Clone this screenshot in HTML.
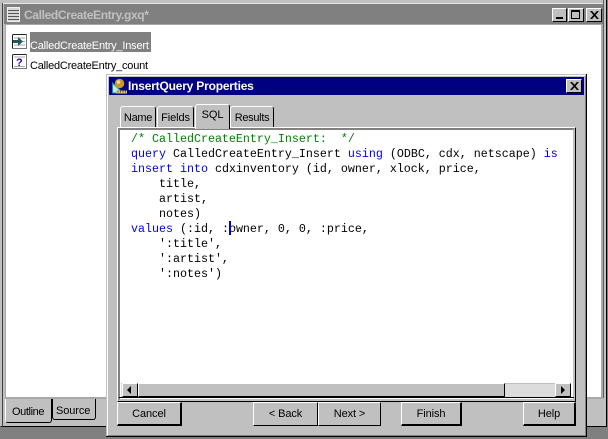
<!DOCTYPE html>
<html><head><meta charset="utf-8">
<style>
html,body{margin:0;padding:0;background:#808080}
#r{position:relative;width:608px;height:439px;overflow:hidden;background:#808080;font-family:"Liberation Sans",sans-serif;font-size:11px;color:#000}
#r div{position:absolute;box-sizing:border-box}
.t{white-space:pre;line-height:14px;letter-spacing:-.1px}
.btn{background:#c0c0c0;border-top:1px solid #fff;border-left:1px solid #fff;border-right:2px solid #000;border-bottom:2px solid #000;text-align:center;line-height:22px;height:24px;letter-spacing:-.1px}
.tb{background:#c0c0c0;border-top:1px solid #fff;border-left:1px solid #fff;border-right:1px solid #000;border-radius:3px 3px 0 0;text-align:center}
.m{position:absolute;left:131px;font-family:"Liberation Mono",monospace;font-size:11.67px;line-height:15px;white-space:pre;color:#000}
.b{color:#0000e0}.g{color:#008000}
.wb{background:#c0c0c0;border-top:1px solid #fff;border-left:1px solid #fff;border-right:1px solid #000;border-bottom:1px solid #000}
</style></head><body><div id="r">
<!-- outer window -->
<div style="left:0;top:0;width:607px;height:427px;background:#c0c0c0;border-right:1px solid #000;border-bottom:1px solid #000;border-left:1px solid #c0c0c0"></div>
<div style="left:2px;top:3px;width:1px;height:424px;background:#404040"></div>
<div style="left:3px;top:3px;width:601px;height:1px;background:#e8e8e8"></div>
<div style="left:603px;top:0;width:1px;height:398px;background:#606060"></div>
<div style="left:4px;top:4px;width:599px;height:20px;background:#808080"></div>
<div style="left:5px;top:24px;width:598px;height:375px;background:#fff;border:1px solid #a8a8a8;border-width:1px 2px 2px 1px"></div>
<!-- title icon -->
<svg style="position:absolute;left:7px;top:7px" width="13" height="15"><rect x="0.5" y="0.5" width="12" height="14" fill="#d8d8d8" stroke="#eee"/><path d="M1 3.5H12M1 6.5H12M1 9.5H12M1 12.5H12" stroke="#555"/></svg>
<div class="t" style="left:24px;top:8px;font-weight:bold;font-size:12px;color:#c0c0c0;letter-spacing:-.36px">CalledCreateEntry.gxq*</div>
<!-- window buttons -->
<div class="wb" style="left:552px;top:8px;width:15px;height:14px"></div>
<div style="left:556px;top:17px;width:7px;height:2px;background:#000"></div>
<div class="wb" style="left:568px;top:8px;width:16px;height:14px"></div>
<div style="left:571px;top:10px;width:9px;height:9px;border:1px solid #000;border-top-width:2px"></div>
<div class="wb" style="left:586px;top:8px;width:16px;height:14px"></div>
<svg style="position:absolute;left:590px;top:11px" width="9" height="8"><path d="M0.5 0L7.5 8M7.5 0L0.5 8M1.5 0L8.5 8M8.5 0L1.5 8" stroke="#000" stroke-width="0.9"/></svg>
<!-- outline icons -->
<svg style="position:absolute;left:12px;top:34px" width="15" height="15"><rect x="0.5" y="0.5" width="14" height="14" fill="#fff" stroke="#777"/><path d="M1 0.5H14M0.5 1V14" stroke="#222"/><path d="M2 4H13M2 7.5H13M2 11H13" stroke="#aaa"/><path d="M1 6H6V3L11 7.5L6 12V9H1Z" fill="#245a5a"/></svg>
<svg style="position:absolute;left:12px;top:54px" width="15" height="15"><rect x="0.5" y="0.5" width="14" height="14" fill="#fff" stroke="#777"/><path d="M1 0.5H14M0.5 1V14" stroke="#222"/><path d="M2 3H13M2 12.5H13" stroke="#aaa"/><text x="4" y="12" font-family="Liberation Sans" font-size="11" font-weight="bold" fill="#2a009a">?</text></svg>
<div style="left:30px;top:32px;width:121px;height:20px;background:#808080"></div>
<div class="t" style="left:30px;top:39px;color:#fff;letter-spacing:-.2px">CalledCreateEntry_Insert</div>
<div class="t" style="left:30px;top:59px;letter-spacing:-.22px">CalledCreateEntry_count</div>
<!-- bottom tabs -->
<div style="left:52px;top:399px;width:44px;height:21px;background:#c0c0c0;border-right:1px solid #000;border-bottom:1px solid #000;border-left:1px solid #000;border-radius:0 0 3px 3px"></div>
<div class="t" style="left:56px;top:404px">Source</div>
<div style="left:5px;top:399px;width:47px;height:24px;background:#c0c0c0;border-left:1px solid #fff;border-right:1px solid #000;border-bottom:1px solid #000;border-radius:0 0 3px 3px"></div>
<div class="t" style="left:12px;top:405px;letter-spacing:-.4px">Outline</div>
<!-- dialog -->
<div style="left:106px;top:74px;width:481px;height:363px;background:#c0c0c0;border-right:1px solid #000;border-bottom:1px solid #000"></div>
<div style="left:107px;top:75px;width:479px;height:361px;border-top:1px solid #fff;border-left:1px solid #fff;border-right:1px solid #808080;border-bottom:1px solid #808080"></div>
<div style="left:109px;top:77px;width:475px;height:18px;background:#000080"></div>
<svg style="position:absolute;left:111px;top:78px" width="17" height="16"><path d="M1.5 5V15H12Z" fill="#bfe8ef" stroke="#0a8fa8"/><circle cx="8.5" cy="5.5" r="4.8" fill="#c8962a"/><circle cx="7.5" cy="4" r="1.8" fill="#f0dca0"/><rect x="5" y="12.5" width="11" height="3" fill="#e0c860"/><path d="M7 12.5v2M9.5 12.5v2M12 12.5v2M14.5 12.5v2" stroke="#555"/></svg>
<div class="t" style="left:128px;top:79px;font-weight:bold;font-size:12px;color:#fff;letter-spacing:-.2px">InsertQuery Properties</div>
<div class="wb" style="left:566px;top:79px;width:16px;height:14px"></div>
<svg style="position:absolute;left:570px;top:82px" width="9" height="8"><path d="M0.5 0L7.5 8M7.5 0L0.5 8M1.5 0L8.5 8M8.5 0L1.5 8" stroke="#000" stroke-width="0.9"/></svg>
<!-- dialog tabs -->
<div class="tb t" style="left:120px;top:106px;width:36px;height:21px;padding-top:4px;letter-spacing:-.3px">Name</div>
<div class="tb t" style="left:157px;top:106px;width:37px;height:21px;padding-top:4px">Fields</div>
<div class="tb t" style="left:230px;top:106px;width:44px;height:21px;padding-top:4px;letter-spacing:-.3px">Results</div>
<div style="left:117px;top:127px;width:459px;height:275px;background:#c0c0c0;border-top:1px solid #fff;border-left:1px solid #fff;border-right:1px solid #000;border-bottom:1px solid #000"></div>
<div style="left:118px;top:128px;width:457px;height:273px;background:#fff;border-top:2px solid #808080;border-left:2px solid #808080;border-right:2px solid #c0c0c0;border-bottom:2px solid #c0c0c0"></div>
<div class="tb t" style="left:195px;top:104px;width:35px;height:25px;padding-top:3px;text-align:center">SQL</div>
<!-- code -->
<div class="m" style="top:132px"><span class="g">/* CalledCreateEntry_Insert:  */</span>
<span class="b">query</span> CalledCreateEntry_Insert <span class="b">using</span> (ODBC, cdx, netscape) <span class="b">is</span>
<span class="b">insert into</span> cdxinventory (id, owner, xlock, price,
    title,
    artist,
    notes)
<span class="b">values</span> (:id, :owner, 0, 0, :price,
    ':title',
    ':artist',
    ':notes')</div>
<div style="left:229px;top:221px;width:2px;height:14px;background:#0000e0"></div>
<!-- scrollbar -->
<div style="left:121px;top:383px;width:450px;height:14px;background:#dcdcdc;border-top:1px solid #c0c0c0"></div>
<div class="wb" style="left:122px;top:383px;width:16px;height:14px"></div>
<svg style="position:absolute;left:127px;top:386px" width="6" height="9"><path d="M4 0V8L0 4Z" fill="#000"/></svg>
<div class="wb" style="left:138px;top:383px;width:367px;height:14px"></div>
<div class="wb" style="left:555px;top:383px;width:16px;height:14px"></div>
<svg style="position:absolute;left:561px;top:386px" width="6" height="9"><path d="M0 0V8L4 4Z" fill="#000"/></svg>
<div style="left:119px;top:397px;width:455px;height:1px;background:#000"></div>
<!-- dialog buttons -->
<div class="btn" style="left:117px;top:402px;width:65px">Cancel</div>
<div class="btn" style="left:253px;top:402px;width:65px;border-right:1px solid #000;border-bottom:1px solid #000">&lt; Back</div>
<div class="btn" style="left:318px;top:402px;width:63px;border-right:1px solid #000;border-bottom:1px solid #000">Next &gt;</div>
<div class="btn" style="left:401px;top:402px;width:61px">Finish</div>
<div class="btn" style="left:523px;top:402px;width:53px">Help</div>
</div></body></html>
